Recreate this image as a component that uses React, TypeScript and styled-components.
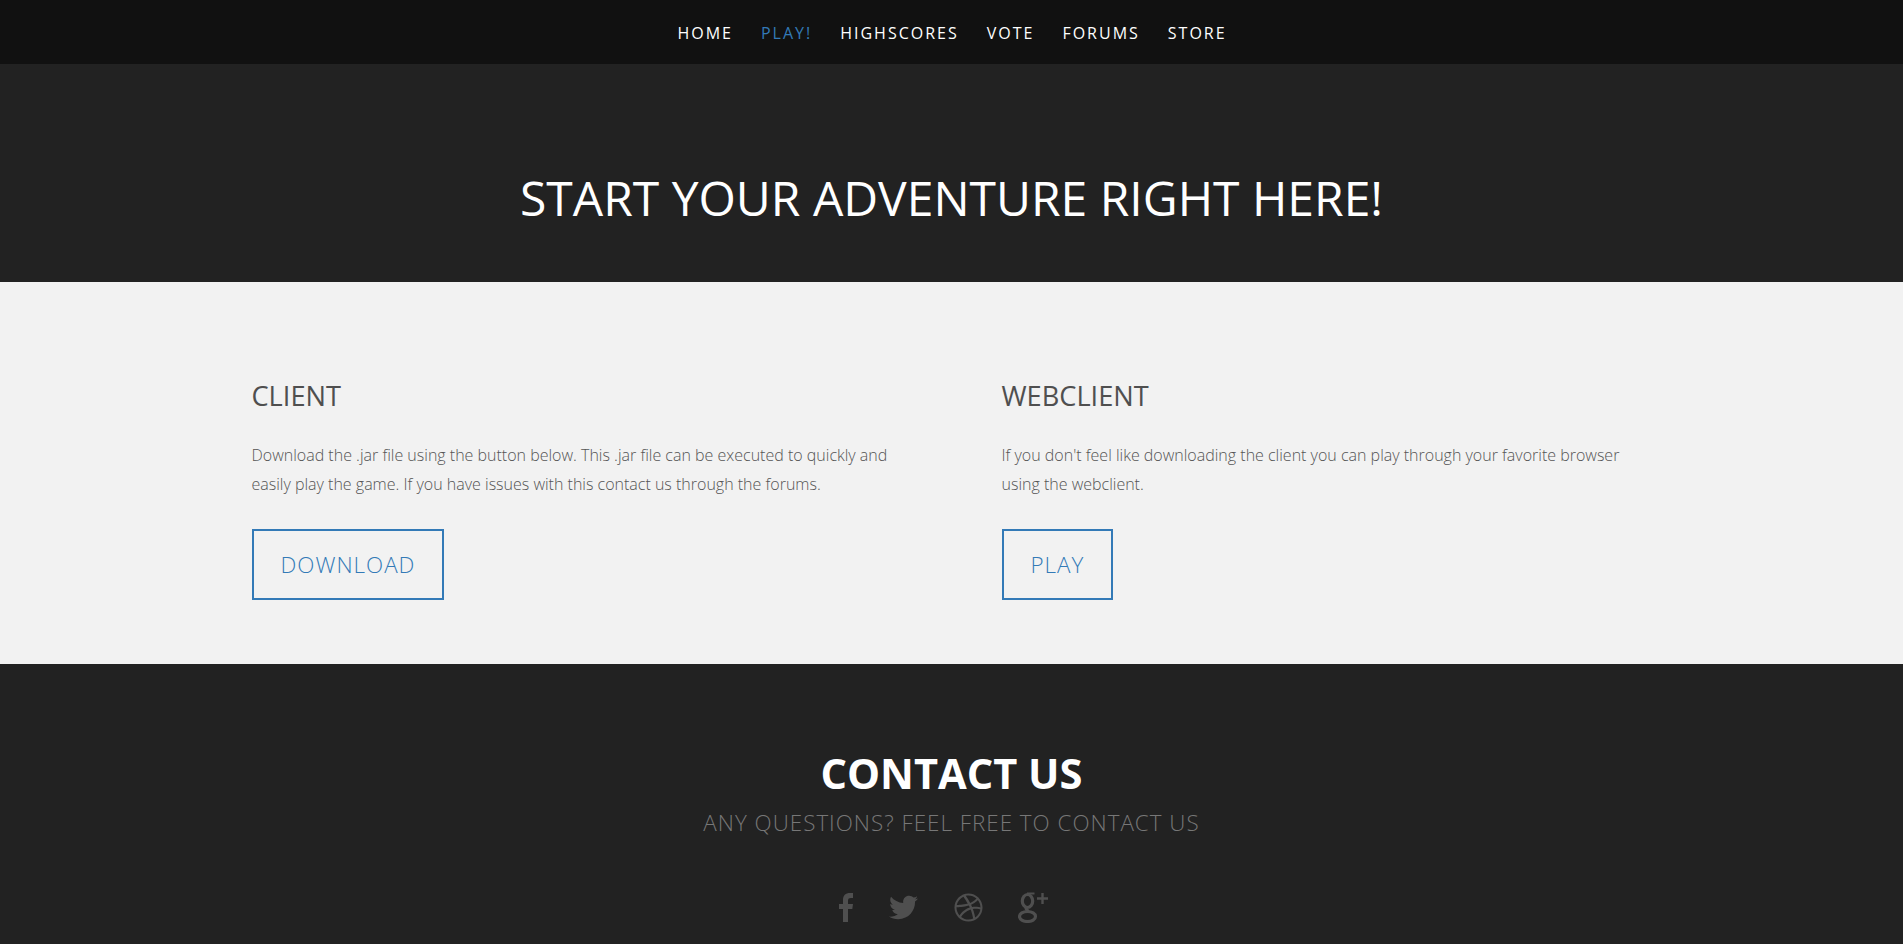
import React from "react";
import styled, { createGlobalStyle } from "styled-components";
import { FaTwitter, FaDribbble } from "react-icons/fa";

const Global = createGlobalStyle`
  html, body { margin: 0; padding: 0; background: #222; }
  body { font-family: "Open Sans", "Liberation Sans", sans-serif; }
  * { box-sizing: border-box; }
`;

const Nav = styled.nav`
  height: 64px;
  background: #111;
  display: flex;
  justify-content: center;
  align-items: center;
  gap: 28px;
  padding: 2px 0 0 1px;
`;
const NavLink = styled.a<{ $active?: boolean }>`
  font-size: 16px;
  font-weight: 400;
  letter-spacing: 2px;
  color: ${(p) => (p.$active ? "#337ab7" : "#fff")};
`;
const Hero = styled.header`
  height: 218px;
  background: #222;
  display: flex;
  align-items: center;
  justify-content: center;
  padding-top: 50px;
`;
const HeroTitle = styled.h1`
  margin: 0;
  font-size: 48px;
  font-weight: 400;
  color: #fff;
  line-height: 1.2;
`;
const Downloads = styled.section`
  height: 382px;
  background: #f2f2f2;
  padding-top: 98px;
`;
const Columns = styled.div`
  width: 1400px;
  margin: 0 auto;
  display: grid;
  grid-template-columns: 750px 650px;
`;
const Column = styled.article`
  width: 650px;
`;
const ColumnTitle = styled.h3`
  margin: 0 0 28px;
  font-size: 27.2px;
  line-height: 1.2;
  font-weight: 400;
  color: #4f4f4f;
`;
const Body = styled.p`
  margin: 0 0 30px;
  font-size: 16px;
  font-weight: 300;
  line-height: 29px;
  color: #555;
`;
const OutlineButton = styled.a`
  display: inline-flex;
  align-items: center;
  height: 71px;
  padding: 0 27px;
  border: 2px solid #337ab7;
  font-size: 22.4px;
  font-weight: 300;
  letter-spacing: 1px;
  color: #337ab7;
`;
const Footer = styled.footer`
  height: 280px;
  background: #222;
  display: flex;
  flex-direction: column;
  align-items: center;
  padding-top: 85px;
`;
const FooterTitle = styled.h2`
  margin: 0;
  font-size: 41.6px;
  line-height: 1.2;
  font-weight: 700;
  color: #fff;
`;
const FooterSub = styled.p`
  margin: 7px 0 0;
  font-size: 22.4px;
  line-height: 1.5;
  font-weight: 300;
  letter-spacing: 1px;
  color: #777;
`;
const Social = styled.div`
  display: flex;
  align-items: center;
  gap: 36px;
  margin-top: 52px;
  padding-right: 16px;
  color: #4f4f4f;
  height: 32px;
`;
const SocialItem = styled.a`
  display: flex;
  color: inherit;
`;
const FacebookMark = styled.svg`
  width: 14px;
  height: 29px;
`;
const TwitterMark = styled(FaTwitter)`
  width: 29px;
  height: 29px;
`;
const DribbbleMark = styled(FaDribbble)`
  width: 29px;
  height: 29px;
`;
const GoogleMark = styled.svg`
  width: 30px;
  height: 31px;
  margin-left: -1px;
  fill: none;
  stroke: currentColor;
`;

export default function App() {
  return (
    <>
      <Global />
      <Nav>
        <NavLink>HOME</NavLink>
        <NavLink $active>PLAY!</NavLink>
        <NavLink>HIGHSCORES</NavLink>
        <NavLink>VOTE</NavLink>
        <NavLink>FORUMS</NavLink>
        <NavLink>STORE</NavLink>
      </Nav>
      <Hero>
        <HeroTitle>START YOUR ADVENTURE RIGHT HERE!</HeroTitle>
      </Hero>
      <Downloads>
        <Columns>
          <Column>
            <ColumnTitle>CLIENT</ColumnTitle>
            <Body>
              Download the .jar file using the button below. This .jar file can be executed to quickly and easily play
              the game. If you have issues with this contact us through the forums.
            </Body>
            <OutlineButton>DOWNLOAD</OutlineButton>
          </Column>
          <Column>
            <ColumnTitle>WEBCLIENT</ColumnTitle>
            <Body>
              If you don't feel like downloading the client you can play through your favorite browser using the
              webclient.
            </Body>
            <OutlineButton>PLAY</OutlineButton>
          </Column>
        </Columns>
      </Downloads>
      <Footer>
        <FooterTitle>CONTACT US</FooterTitle>
        <FooterSub>ANY QUESTIONS? FEEL FREE TO CONTACT US</FooterSub>
        <Social>
          <SocialItem>
            <FacebookMark viewBox="0 0 14 29" fill="currentColor">
              <path d="M4 29V16H0v-5h4V7c0-4.5 2.5-7 7-7h3v5h-2c-2 0-3 .7-3 2.7V11h5l-.7 5H9v13z" />
            </FacebookMark>
          </SocialItem>
          <SocialItem><TwitterMark /></SocialItem>
          <SocialItem><DribbbleMark /></SocialItem>
          <SocialItem>
            <GoogleMark viewBox="0 0 30 31">
              <ellipse cx="9.5" cy="9" rx="5.2" ry="6.5" strokeWidth="3.2" />
              <ellipse cx="9.5" cy="24.5" rx="8" ry="5" strokeWidth="3.2" />
              <path d="M8.5 15c-1.2 1.6 0 2.8 2 4.4" strokeWidth="3.2" />
              <path d="M9 1.5h7.5" strokeWidth="2" />
              <path d="M24.5 1v11M19 6.5h11" strokeWidth="2.4" />
            </GoogleMark>
          </SocialItem>
        </Social>
      </Footer>
    </>
  );
}
